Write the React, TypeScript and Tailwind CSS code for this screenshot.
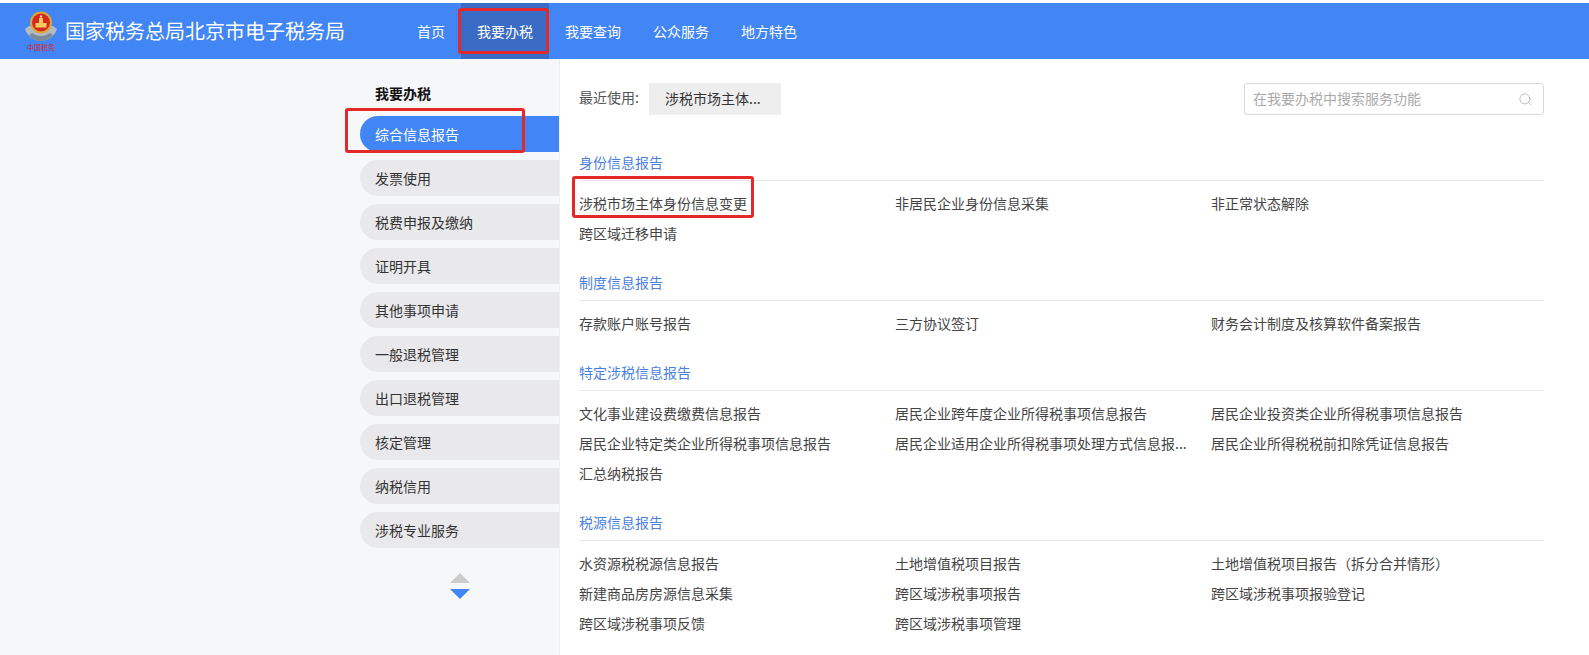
import React from 'react';
import { Search } from 'lucide-react';

const navItems = ['首页', '我要办税', '我要查询', '公众服务', '地方特色'];

const sideItems = [
  '综合信息报告',
  '发票使用',
  '税费申报及缴纳',
  '证明开具',
  '其他事项申请',
  '一般退税管理',
  '出口退税管理',
  '核定管理',
  '纳税信用',
  '涉税专业服务',
];

const sections = [
  {
    title: '身份信息报告',
    items: ['涉税市场主体身份信息变更', '非居民企业身份信息采集', '非正常状态解除', '跨区域迁移申请'],
  },
  {
    title: '制度信息报告',
    items: ['存款账户账号报告', '三方协议签订', '财务会计制度及核算软件备案报告'],
  },
  {
    title: '特定涉税信息报告',
    items: [
      '文化事业建设费缴费信息报告',
      '居民企业跨年度企业所得税事项信息报告',
      '居民企业投资类企业所得税事项信息报告',
      '居民企业特定类企业所得税事项信息报告',
      '居民企业适用企业所得税事项处理方式信息报...',
      '居民企业所得税税前扣除凭证信息报告',
      '汇总纳税报告',
    ],
  },
  {
    title: '税源信息报告',
    items: [
      '水资源税税源信息报告',
      '土地增值税项目报告',
      '土地增值税项目报告（拆分合并情形）',
      '新建商品房房源信息采集',
      '跨区域涉税事项报告',
      '跨区域涉税事项报验登记',
      '跨区域涉税事项反馈',
      '跨区域涉税事项管理',
    ],
  },
];

function Emblem() {
  return (
    <div className="flex w-[34px] flex-col items-center">
      <svg width="34" height="32" viewBox="0 0 34 32">
        <path d="M1 18c2 7 9 12 16 12s14-5 16-12l-4-3H5z" fill="#b4bac4" />
        <path d="M5 24c3 4 8 6 12 6s9-2 12-6l-3-2c-3 2-6 3-9 3s-6-1-9-3z" fill="#7f8a99" />
        <circle cx="17" cy="11.5" r="11" fill="#d9a83a" />
        <circle cx="17" cy="11.5" r="9" fill="#d8261f" />
        <rect x="11.5" y="12" width="11" height="4.5" fill="#f0c95f" />
        <rect x="15" y="7" width="4" height="5" fill="#f0c95f" />
        <circle cx="17" cy="5.5" r="1.2" fill="#f7dc7d" />
      </svg>
      <span className="mt-[-1px] text-[7px] leading-[10px] whitespace-nowrap text-[#d8261f]">中国税务</span>
    </div>
  );
}

export default function App() {
  return (
    <div
      className="h-[655px] w-[1589px] overflow-hidden bg-white pt-[3px] text-[14px] text-[#333]"
      style={{ fontFamily: '"Noto Sans CJK SC", "Liberation Sans", sans-serif' }}
    >
      {/* Header */}
      <header className="flex h-[56px] items-stretch bg-[#4285f4] text-white">
        <div className="flex w-[401px] items-center pl-[24px]">
          <Emblem />
          <span className="ml-[7px] text-[20px] whitespace-nowrap">国家税务总局北京市电子税务局</span>
        </div>
        <nav className="flex">
          {navItems.map((item) => (
            <div
              key={item}
              className={`relative flex items-center px-4 ${item === '我要办税' ? 'bg-[#3a6bc5]' : ''}`}
            >
              {item}
              {item === '我要办税' && (
                <span className="absolute top-[5px] right-0 left-[-3px] h-[46px] rounded-[3px] border-[3px] border-[#e5292b]" />
              )}
            </div>
          ))}
        </nav>
      </header>

      <div className="flex h-[596px]">
        {/* Sidebar */}
        <aside className="w-[560px] shrink-0 border-r border-[#eeeff1] bg-[#f6f7f9] pt-[24px] pl-[360px]">
          <div className="mb-[13px] pl-[15px] text-[14px] leading-[20px] font-bold text-[#111]">我要办税</div>
          <ul className="flex flex-col gap-2">
            {sideItems.map((item, i) => (
              <li
                key={item}
                className={`relative flex h-[36px] items-center rounded-l-[18px] pl-[15px] ${
                  i === 0 ? 'bg-[#4285f4] text-white' : 'bg-[#e9e9eb] text-[#333]'
                }`}
              >
                {item}
                {i === 0 && (
                  <span className="absolute top-[-8px] left-[-15px] h-[45px] w-[180px] rounded-[3px] border-[3px] border-[#e5292b]" />
                )}
              </li>
            ))}
          </ul>
          <div className="mt-[25px] ml-[90px] flex w-[20px] flex-col gap-[6px]">
            <div className="h-0 w-0 border-x-[10px] border-b-[10px] border-x-transparent border-b-[#cccccc]" />
            <div className="h-0 w-0 border-x-[10px] border-t-[10px] border-x-transparent border-t-[#4285f4]" />
          </div>
        </aside>

        {/* Main */}
        <main className="w-[984px] pt-[24px] pl-[19px]">
          <div className="flex h-[32px] items-center justify-between">
            <div className="flex items-center">
              <span className="w-[70px] pb-[3px] text-[#555]">最近使用:</span>
              <span className="flex h-[32px] w-[132px] items-center pb-[2px] pl-[16px] bg-[#eeeeef] text-[#333]">
                涉税市场主体...
              </span>
            </div>
            <div className="flex h-[32px] w-[300px] items-center justify-between rounded-[3px] border border-[#d9d9d9] pr-[10px] pl-[8px]">
              <input
                className="w-[240px] bg-transparent pb-[2px] text-[14px] outline-none placeholder:text-[#aaaaaa]"
                placeholder="在我要办税中搜索服务功能"
              />
              <Search size={15} strokeWidth={1} className="text-[#999999]" />
            </div>
          </div>

          <div className="mt-[31px]">
            {sections.map((section) => (
              <section key={section.title} className="mb-[18px]">
                <h3 className="flex h-[35px] items-center border-b border-[#e8e8e8] pb-[1px] text-[14px] font-normal text-[#4a7fe0]">
                  {section.title}
                </h3>
                <div className="mt-[7px] grid grid-cols-[316px_316px_333px]">
                  {section.items.map((item, i) => (
                    <div key={item} className="relative flex h-[30px] items-center whitespace-nowrap text-[#444]">
                      {item}
                      {section.title === '身份信息报告' && i === 0 && (
                        <span className="absolute top-[-12px] left-[-7px] h-[42px] w-[182px] rounded-[3px] border-[3px] border-[#e5292b]" />
                      )}
                    </div>
                  ))}
                </div>
              </section>
            ))}
          </div>
        </main>
      </div>
    </div>
  );
}
